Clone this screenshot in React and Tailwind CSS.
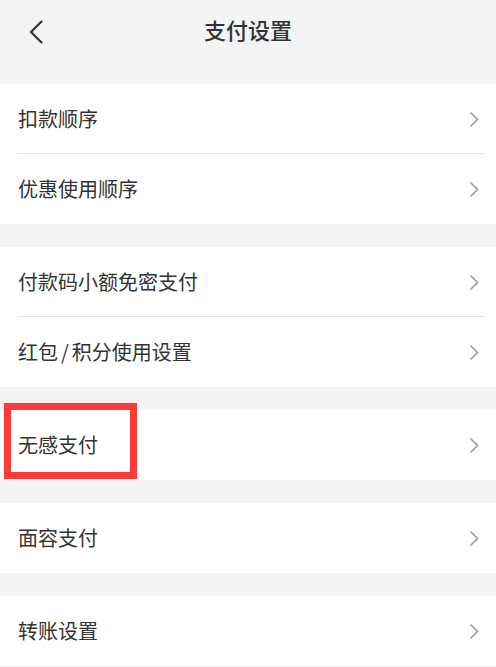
const font = { fontFamily: '"Noto Sans CJK SC", "Noto Sans", sans-serif' };

const Chevron = () => (
  <svg width="10" height="17" viewBox="0 0 10 17" fill="none" className="shrink-0">
    <path d="M1.5 1.5 L8.5 8.5 L1.5 15.5" stroke="#9a9a9a" strokeWidth="1.6" />
  </svg>
);

const Row = ({ label, divider }) => (
  <div className="relative flex h-[70px] items-center justify-between pl-[18px] pr-[17px]">
    <span className="text-[20px] text-[#333]">{label}</span>
    <Chevron />
    {divider && <div className="absolute bottom-0 left-[17px] right-[11px] h-px bg-[#e2e2e2]" />}
  </div>
);

const Section = ({ items }) => (
  <div className="bg-white">
    {items.map((item, i) => (
      <Row key={i} label={item} divider={i < items.length - 1} />
    ))}
  </div>
);

export default function App() {
  return (
    <div className="relative min-h-[667px] w-[496px] bg-[#f4f4f4]" style={font}>
      {/* Header */}
      <div className="relative flex h-[84px] items-start justify-center pt-[13px]">
        <svg width="16" height="26" viewBox="0 0 16 26" className="absolute left-[28px] top-[19px]" fill="none">
          <path d="M14 2 L3 13 L14 24" stroke="#333" strokeWidth="2.2" />
        </svg>
        <h1 className="text-[22px] font-medium leading-[32px] text-[#333]">支付设置</h1>
      </div>

      <div className="flex flex-col gap-[23px] pb-[1px]">
        <Section items={['扣款顺序', '优惠使用顺序']} />
        <Section
          items={[
            '付款码小额免密支付',
            <>红包<span className="mx-[3px]">/</span>积分使用设置</>,
          ]}
        />
        <Section items={['无感支付']} />
        <Section items={['面容支付']} />
        <Section items={['转账设置']} />
      </div>

      {/* highlight box */}
      <div className="absolute left-[4px] top-[403px] h-[76px] w-[133px] border-[7px] border-[#ff3a3a]" />
    </div>
  );
}
